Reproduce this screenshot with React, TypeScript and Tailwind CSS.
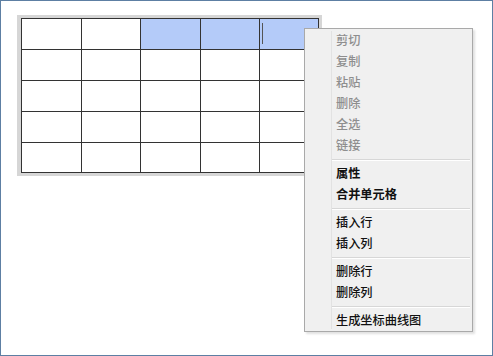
import React from 'react';

type MenuItem = { label: string; disabled?: boolean; bold?: boolean } | 'sep';

const menuItems: MenuItem[] = [
  { label: '剪切', disabled: true },
  { label: '复制', disabled: true },
  { label: '粘贴', disabled: true },
  { label: '删除', disabled: true },
  { label: '全选', disabled: true },
  { label: '链接', disabled: true },
  'sep',
  { label: '属性', bold: true },
  { label: '合并单元格', bold: true },
  'sep',
  { label: '插入行' },
  { label: '插入列' },
  'sep',
  { label: '删除行' },
  { label: '删除列' },
  'sep',
  { label: '生成坐标曲线图' },
];

const colWidths = ['w-[60px]', 'w-[59px]', 'w-[60px]', 'w-[59px]', 'w-[59px]'];

export default function App() {
  return (
    <div
      className="relative w-[493px] h-[356px] bg-white border border-[#5d7fa3] overflow-hidden"
      style={{ fontFamily: '"Noto Sans CJK SC", "Noto Sans", sans-serif' }}
    >
      {/* Table */}
      <div className="ml-[16px] mt-[14px] w-[305px] bg-[#d6d6d6] pl-[4px] pr-[3px] pt-[3px] pb-[3px]">
        <div className="flex flex-col border-t border-l border-[#333] bg-white">
          {[0, 1, 2, 3, 4].map((r) => (
            <div key={r} className="flex">
              {colWidths.map((w, c) => (
                <div
                  key={c}
                  className={`${w} ${r === 4 ? 'h-[30px]' : 'h-[31px]'} border-r border-b border-[#333] relative ${
                    r === 0 && c >= 2 ? 'bg-[#b4cbf9]' : 'bg-white'
                  }`}
                >
                  {r === 0 && c === 4 && (
                    <div className="absolute left-[2px] top-[4px] w-[1px] h-[21px] bg-[#555]" />
                  )}
                </div>
              ))}
            </div>
          ))}
        </div>
      </div>

      {/* Context menu */}
      <div className="absolute left-[303px] top-[27px] w-[169px] h-[304px] flex flex-col bg-[#f0f0f0] border border-[#a9a9a9] shadow-[2px_2px_2px_rgba(0,0,0,0.12)] pt-[1px]">
        <div className="absolute left-[26px] top-[2px] bottom-[2px] w-[1px] bg-[#e2e2e2]" />
        {menuItems.map((item, i) =>
          item === 'sep' ? (
            <div key={i} className="ml-[27px] mr-[2px] mt-[3px] mb-[2px] h-[1px] bg-[#d7d7d7] border-b border-white box-content" />
          ) : (
            <div
              key={i}
              className={`h-[21px] shrink-0 pl-[31px] flex items-center text-[12.2px] leading-none ${
                item.disabled ? 'text-[#8e8e8e]' : 'text-[#111]'
              } ${item.bold ? 'font-semibold' : 'font-medium'}`}
            >
              {item.label}
            </div>
          )
        )}
      </div>
    </div>
  );
}
